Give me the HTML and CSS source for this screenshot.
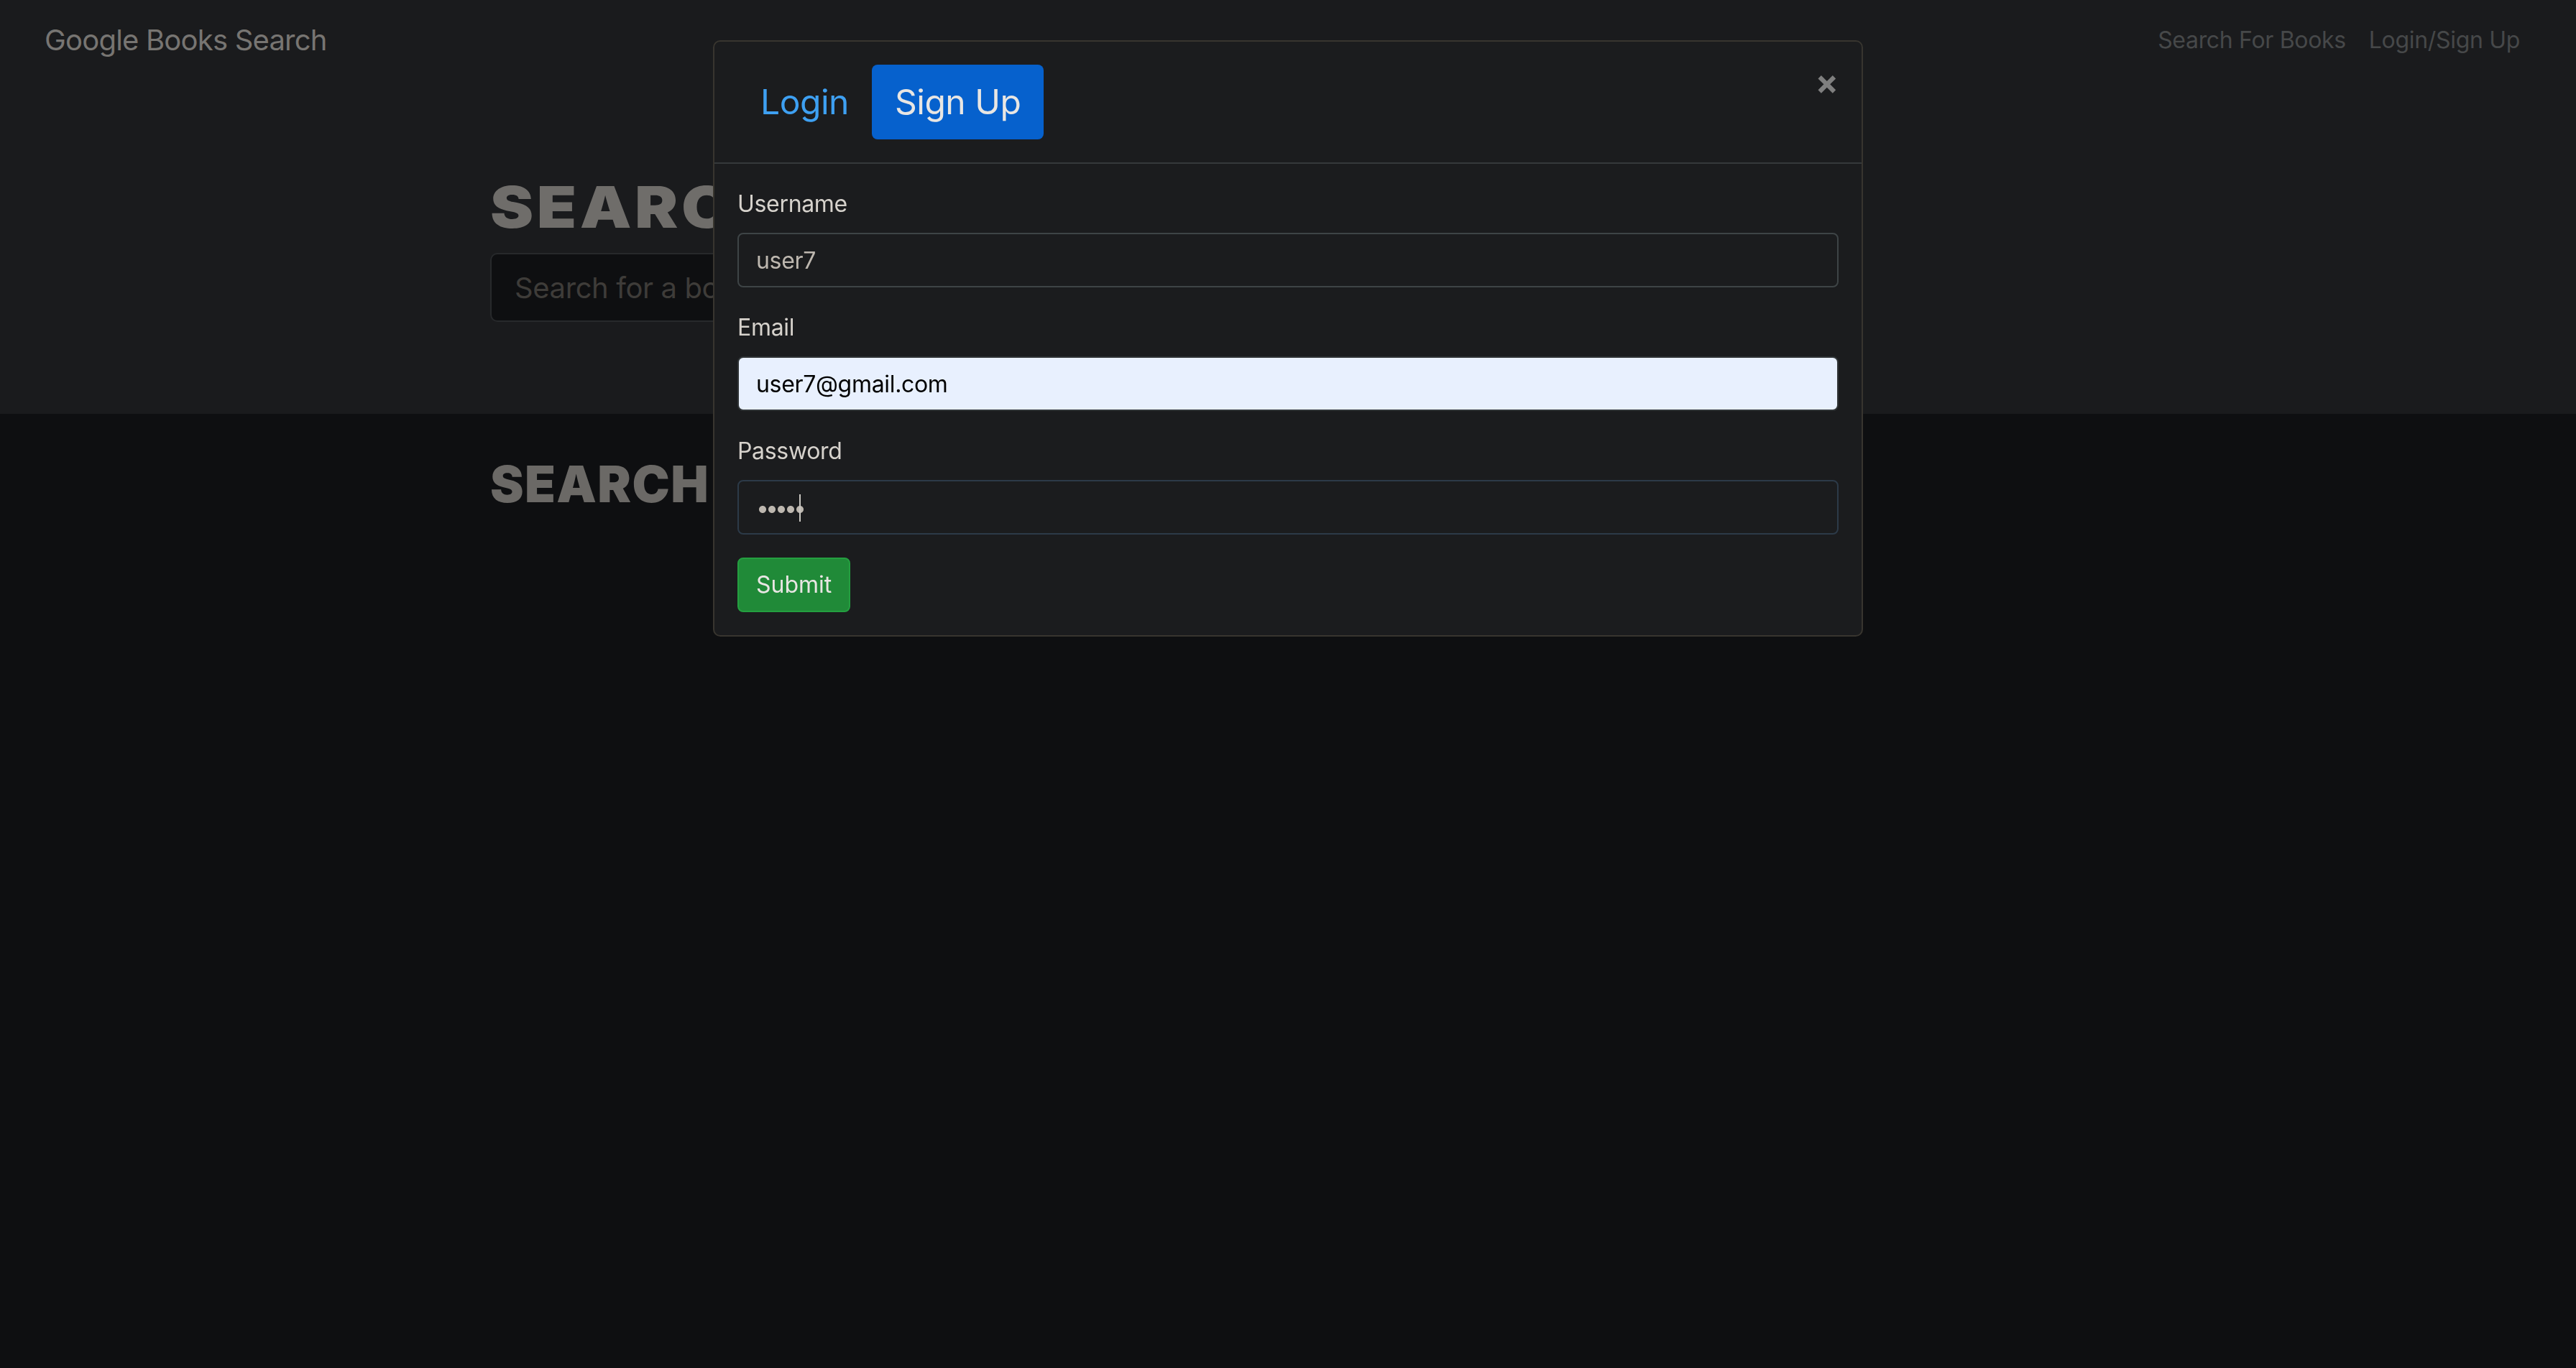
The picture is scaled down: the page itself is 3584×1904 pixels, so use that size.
FILE: index.html
```html
<!DOCTYPE html>
<html lang="en">
<head>
<meta charset="utf-8">
<title>Google Books Search</title>
<link rel="stylesheet" href="styles.css">
</head>
<body>
<nav class="navbar">
  <div class="navbar-inner">
    <a class="brand" href="#">Google Books Search</a>
    <div class="nav-links">
      <a class="nav-link" href="#">Search For Books</a>
      <a class="nav-link" href="#">Login/Sign Up</a>
    </div>
  </div>
</nav>
<header class="jumbotron">
  <div class="container">
    <h1 class="hero-title">Search for Books!</h1>
    <form class="search-row">
      <input class="search-input" type="text" placeholder="Search for a book">
      <button class="search-btn" type="button">Submit Search</button>
    </form>
  </div>
</header>
<main class="container results">
  <h2 class="results-title">Search for a book to begin</h2>
</main>
<div class="modal">
  <div class="modal-content">
    <div class="modal-header">
      <div class="pills">
        <a class="pill" href="#">Login</a>
        <a class="pill active" href="#">Sign Up</a>
      </div>
      <button class="close" type="button">×</button>
    </div>
    <div class="modal-body">
      <form>
        <div class="form-group">
          <label class="form-label" for="username">Username</label>
          <input class="form-control" id="username" type="text" value="user7">
        </div>
        <div class="form-group">
          <label class="form-label" for="email">Email</label>
          <input class="form-control autofilled" id="email" type="email" value="user7@gmail.com">
        </div>
        <div class="form-group">
          <label class="form-label" for="password">Password</label>
          <div class="field-wrap">
            <input class="form-control focused password" id="password" type="password" value="abcde">
            <span class="caret"></span>
          </div>
        </div>
        <button class="btn-submit" type="button">Submit</button>
      </form>
    </div>
  </div>
</div>
</body>
</html>
```
FILE: styles.css
```css
* {
  box-sizing: border-box;
}

html,
body {
  margin: 0;
  padding: 0;
}

body {
  min-height: 1904px;
  background: #0e0f11;
  font-family: Inter, "Noto Sans", "Liberation Sans", sans-serif;
  font-size: 32px;
  line-height: 1.5;
  color: #d6d2cc;
}

/* ---------- navbar ---------- */
.navbar {
  background: #1a1b1d;
  padding: 16px 32px;
}

.navbar-inner {
  display: flex;
  align-items: center;
  justify-content: space-between;
  padding: 0 30px;
}

.brand {
  font-size: 40px;
  line-height: 60px;
  padding: 10px 0;
  letter-spacing: -0.02em;
  color: #777572;
  text-decoration: none;
}

.nav-links {
  display: flex;
}

.nav-link {
  padding: 16px;
  font-size: 32px;
  line-height: 48px;
  letter-spacing: -0.01em;
  color: #464849;
  text-decoration: none;
}

/* ---------- jumbotron ---------- */
.jumbotron {
  background: #1a1b1d;
  padding: 128px 0;
}

.container {
  max-width: 2280px;
  margin: 0 auto;
  padding: 0 30px;
}

.hero-title {
  margin: 0 0 16px;
  font-size: 80px;
  line-height: 1.2;
  font-weight: 900;
  letter-spacing: 0.05em;
  text-transform: uppercase;
  color: #6f6d6a;
  transform: scaleX(1.13);
  transform-origin: left top;
}

.search-row {
  display: flex;
  gap: 60px;
  margin: 0;
}

.search-input {
  width: 1500px;
  height: 96px;
  padding: 16px 32px;
  font-family: inherit;
  font-size: 40px;
  line-height: 1.5;
  letter-spacing: -0.01em;
  color: #8a8680;
  background: #0e0f11;
  border: 2px solid #27292b;
  border-radius: 10px;
  outline: none;
}

.search-input::placeholder {
  color: #3e3c39;
}

.search-btn {
  height: 96px;
  padding: 16px 32px;
  font-family: inherit;
  font-size: 40px;
  color: #6f6d6a;
  background: #10451c;
  border: 2px solid #10451c;
  border-radius: 10px;
}

/* ---------- results ---------- */
.results {
  padding-top: 56px;
}

.results-title {
  margin: 0;
  font-size: 70px;
  line-height: 1.2;
  font-weight: 900;
  letter-spacing: 0.02em;
  text-transform: uppercase;
  color: #6b6966;
}

/* ---------- modal ---------- */
.modal {
  position: fixed;
  inset: 0;
  display: flex;
  justify-content: center;
  align-items: flex-start;
  padding-top: 56px;
}

.modal-content {
  width: 1600px;
  background: #1b1c1e;
  border: 2px solid #38352f;
  border-radius: 10px;
}

.modal-header {
  display: flex;
  align-items: flex-start;
  padding: 32px;
  border-bottom: 2px solid #35393b;
}

.pills {
  display: flex;
}

.pill {
  padding: 16px 32px;
  font-size: 48px;
  line-height: 72px;
  letter-spacing: -0.01em;
  color: #3ea0f2;
  text-decoration: none;
  border-radius: 8px;
}

.pill.active {
  background: #0661cd;
  color: #e8e6e3;
}

.close {
  margin: -32px -32px -32px auto;
  padding: 32px;
  font-family: Inter, "Noto Sans", sans-serif;
  font-size: 48px;
  font-weight: 700;
  line-height: 1;
  color: #7f7f7f;
  background: transparent;
  border: 0;
}

.modal-body {
  padding: 32px;
}

.modal-body form {
  margin: 0;
}

.form-group {
  margin-bottom: 32px;
}

.form-label {
  display: inline-block;
  margin-bottom: 16px;
  font-size: 32px;
  line-height: 48px;
  letter-spacing: -0.01em;
  color: #d6d2cc;
}

.form-control {
  display: block;
  width: 100%;
  height: 76px;
  padding: 12px 24px;
  font-family: inherit;
  font-size: 32px;
  line-height: 48px;
  letter-spacing: -0.01em;
  color: #bdb7af;
  background: #1b1c1e;
  border: 2px solid #3e4446;
  border-radius: 8px;
  outline: none;
}

.form-control.autofilled {
  background: #e8f0fe;
  color: #000000;
  border-color: #303436;
}

.form-control.focused {
  border-color: #2c3a48;
}

.form-control.password {
  letter-spacing: -5px;
}

.field-wrap {
  position: relative;
}

.caret {
  position: absolute;
  left: 86px;
  top: 20px;
  width: 2px;
  height: 38px;
  background: #c9c6c1;
}

.btn-submit {
  height: 76px;
  padding: 12px 24px;
  font-family: inherit;
  font-size: 32px;
  line-height: 48px;
  color: #e8e6e3;
  background: #208a38;
  border: 2px solid #249f40;
  border-radius: 8px;
}
```
